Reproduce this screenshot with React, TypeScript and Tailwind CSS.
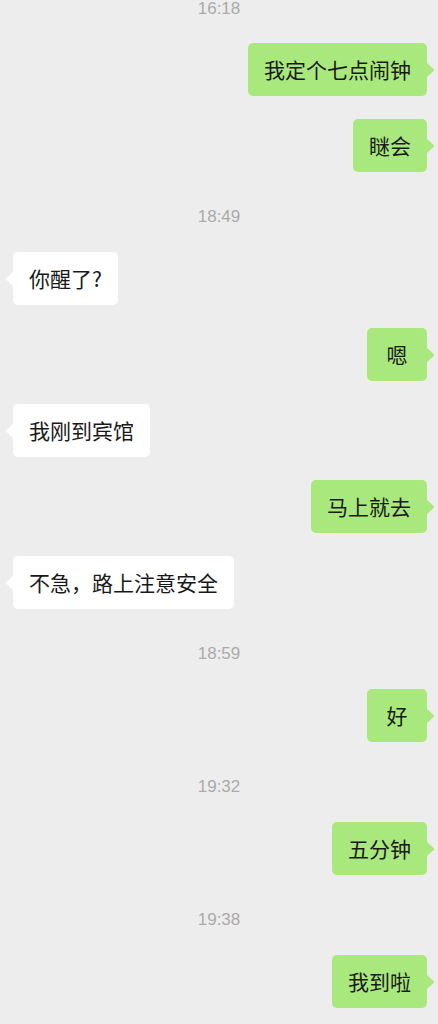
type Msg =
  | { kind: "time"; text: string }
  | { kind: "me" | "them"; text: string };

const messages: Msg[] = [
  { kind: "time", text: "16:18" },
  { kind: "me", text: "我定个七点闹钟" },
  { kind: "me", text: "瞇会" },
  { kind: "time", text: "18:49" },
  { kind: "them", text: "你醒了?" },
  { kind: "me", text: "嗯" },
  { kind: "them", text: "我刚到宾馆" },
  { kind: "me", text: "马上就去" },
  { kind: "them", text: "不急，路上注意安全" },
  { kind: "time", text: "18:59" },
  { kind: "me", text: "好" },
  { kind: "time", text: "19:32" },
  { kind: "me", text: "五分钟" },
  { kind: "time", text: "19:38" },
  { kind: "me", text: "我到啦" },
];

function Tail({ side, color }: { side: "left" | "right"; color: string }) {
  return side === "right" ? (
    <svg
      width="8"
      height="14"
      viewBox="0 0 8 14"
      className="absolute left-full top-[20px]"
    >
      <path d="M0 0 L6.6 6 Q7.6 7 6.6 8 L0 14 Z" fill={color} />
    </svg>
  ) : (
    <svg
      width="8"
      height="14"
      viewBox="0 0 8 14"
      className="absolute right-full top-[20px]"
    >
      <path d="M8 0 L1.4 6 Q0.4 7 1.4 8 L8 14 Z" fill={color} />
    </svg>
  );
}

function Bubble({ mine, text }: { mine: boolean; text: string }) {
  const color = mine ? "#a9e87c" : "#ffffff";
  return (
    <div className={mine ? "flex justify-end pr-[11px]" : "flex justify-start pl-[13px]"}>
      <div
        className={
          mine
            ? "relative min-w-[60px] rounded-[5px] bg-[#a9e87c] px-4 py-3 text-center text-[21px] leading-[29px] text-[#191919]"
            : "relative min-w-[60px] rounded-[5px] bg-white px-4 py-3 text-center text-[21px] leading-[29px] text-[#191919]"
        }
      >
        {text}
        <Tail side={mine ? "right" : "left"} color={color} />
      </div>
    </div>
  );
}

export default function App() {
  return (
    <div
      className="flex min-h-screen flex-col overflow-hidden bg-[#ededed]"
      style={{ fontFamily: '"Noto Sans CJK SC", "Noto Sans", sans-serif' }}
    >
      {messages.map((m, i) => {
        const prev = messages[i - 1];
        if (m.kind === "time") {
          return (
            <div
              key={i}
              className={
                i === 0
                  ? "mt-[-1px] text-center text-[17px] leading-5 text-[#aaaaaa] [font-family:'Liberation_Sans',sans-serif]"
                  : "mt-[35px] text-center text-[17px] leading-5 text-[#aaaaaa] [font-family:'Liberation_Sans',sans-serif]"
              }
            >
              {m.text}
            </div>
          );
        }
        const gap = prev && prev.kind === "time" ? (i === 1 ? "mt-[24px]" : "mt-[25px]") : "mt-[23px]";
        return (
          <div key={i} className={gap}>
            <Bubble mine={m.kind === "me"} text={m.text} />
          </div>
        );
      })}
    </div>
  );
}
